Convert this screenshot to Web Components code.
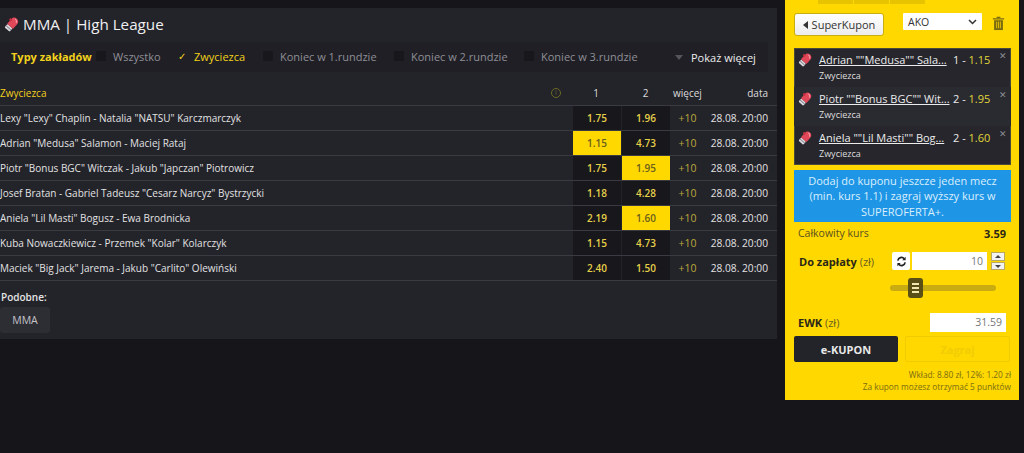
<!DOCTYPE html>
<html lang="pl">
<head>
<meta charset="utf-8">
<title>MMA | High League</title>
<style>
  html, body { margin: 0; height: 453px; overflow: hidden; background: #15151a; }
  body { font-family: "Open Sans", sans-serif; color: #e4e4e4; }
  #page { display: flex; align-items: flex-start; }
</style>
</head>
<body>
<div id="page">
  <league-panel title-text="MMA | High League">
    <market-filter slot="filters"></market-filter>
    <odds-row names='Lexy "Lexy" Chaplin - Natalia "NATSU" Karczmarczyk' one="1.75" two="1.96"></odds-row>
    <odds-row names='Adrian "Medusa" Salamon - Maciej Rataj' one="1.15" two="4.73" picked="1"></odds-row>
    <odds-row names='Piotr "Bonus BGC" Witczak - Jakub "Japczan" Piotrowicz' one="1.75" two="1.95" picked="2"></odds-row>
    <odds-row names='Josef Bratan - Gabriel Tadeusz "Cesarz Narcyz" Bystrzycki' one="1.18" two="4.28"></odds-row>
    <odds-row names='Aniela "Lil Masti" Bogusz - Ewa Brodnicka' one="2.19" two="1.60" picked="2"></odds-row>
    <odds-row names='Kuba Nowaczkiewicz - Przemek "Kolar" Kolarczyk' one="1.15" two="4.73"></odds-row>
    <odds-row names='Maciek "Big Jack" Jarema - Jakub "Carlito" Olewiński' one="2.40" two="1.50"></odds-row>
  </league-panel>
  <coupon-panel>
    <coupon-item names='Adrian ""Medusa"" Sala...' pick="1" odd="1.15"></coupon-item>
    <coupon-item names='Piotr ""Bonus BGC"" Wit...' pick="2" odd="1.95"></coupon-item>
    <coupon-item names='Aniela ""Lil Masti"" Bog...' pick="2" odd="1.60"></coupon-item>
  </coupon-panel>
</div>

<script>
const gloveIcon = (size) => `
  <svg width="${size}" height="${size}" viewBox="0 0 16 16" aria-hidden="true">
    <g transform="rotate(42 8 8)">
      <rect x="4.6" y="11" width="6.8" height="4.4" rx="1" fill="#d9d9de"/>
      <rect x="4.6" y="12.6" width="6.8" height="1" fill="#8a8a92"/>
      <path d="M4.2 11 V4.6 C4.2 2 6 .8 8 .8 C10.4 .8 12 2.4 12 4.8 V11 Z" fill="#e0485a"/>
      <path d="M4.2 7 C2.6 7 2.2 5.2 3.4 4.4 L5.4 4.8 V7 Z" fill="#c7303f"/>
      <path d="M7 2.4 C8.6 2 10.2 3 10.4 4.6" fill="none" stroke="#f3a0aa" stroke-width="1"/>
    </g>
  </svg>`;

class LeaguePanel extends HTMLElement {
  constructor() {
    super();
    this.shadowDOM = this.attachShadow({ mode: "open" });
  }

  connectedCallback() {
    this.shadowDOM.innerHTML = `
    <style>
      :host {
        display: block;
        width: 777px;
        margin-top: 8px;
        background: #23232a;
        flex: none;
      }
      header {
        display: flex;
        align-items: center;
        gap: 3px;
        height: 34px;
        padding: 0 0 2px 4px;
        box-sizing: border-box;
        font-size: 15.2px;
        color: #f0f0f0;
      }
      .head {
        display: flex;
        align-items: center;
        height: 24px;
        margin-top: 9px;
        font-size: 10px;
      }
      .head .name { flex: 1; color: #f2cf1c; }
      .head .info {
        width: 10px;
        height: 10px;
        margin-right: 12px;
        border: 1px solid #6b6a24;
        border-radius: 50%;
        box-sizing: border-box;
        color: #6b6a24;
        font-size: 7px;
        line-height: 8px;
        text-align: center;
      }
      .head span.c { text-align: center; color: #dcdcdc; box-sizing: border-box; }
      .c1 { width: 49px; padding-right: 3px; }
      .c2 { width: 49px; padding-right: 2px; }
      .c3 { width: 33px; }
      .head span.c4 { width: 73px; padding-right: 9px; text-align: right; }
      .rows { border-top: 1px solid #3a3a42; }
      .similar {
        display: flex;
        flex-direction: column;
        align-items: flex-start;
        padding: 9px 0 6px 1px;
        font-size: 10px;
        font-weight: 600;
      }
      .similar span:first-child { line-height: 14px; }
      .tag {
        display: flex;
        align-items: center;
        justify-content: center;
        width: 50px;
        height: 26px;
        margin: 3px 0 0 -1px;
        border-radius: 3px;
        background: #2d2d34;
        color: #c4c4c8;
        font-size: 10.5px;
        font-weight: 400;
      }
    </style>
    <header>${gloveIcon(16)}<span>${this.getAttribute("title-text")}</span></header>
    <slot name="filters"></slot>
    <div class="head">
      <span class="name">Zwyciezca</span>
      <span class="info">i</span>
      <span class="c c1">1</span><span class="c c2">2</span><span class="c c3">więcej</span><span class="c c4">data</span>
    </div>
    <div class="rows"><slot></slot></div>
    <div class="similar">
      <span>Podobne:</span>
      <span class="tag">MMA</span>
    </div>
    `;
  }
}

class MarketFilter extends HTMLElement {
  constructor() {
    super();
    this.shadowDOM = this.attachShadow({ mode: "open" });
  }

  connectedCallback() {
    const options = [
      ["Wszystko", 81],
      ["Zwyciezca", 86, true],
      ["Koniec w 1.rundzie", 131],
      ["Koniec w 2.rundzie", 130],
      ["Koniec w 3.rundzie", 130],
    ];
    this.shadowDOM.innerHTML = `
    <style>
      :host {
        display: flex;
        align-items: center;
        box-sizing: border-box;
        height: 30px;
        margin-right: 9px;
        padding: 0 0 2px 11px;
        background: #1f1f25;
        font-size: 11px;
      }
      b { width: 85px; flex: none; color: #f2d21c; font-weight: 700; }
      .opt { display: flex; align-items: center; gap: 7px; flex: none; color: #8f8f96; }
      .box {
        width: 10px;
        height: 10px;
        background: #17171c;
        flex: none;
        color: #f2d21c;
        font-size: 10px;
        line-height: 10px;
        text-align: center;
      }
      .on { color: #f2d21c; }
      .on .box { background: transparent; }
      .more {
        display: flex;
        align-items: center;
        gap: 8px;
        margin: 2px 0 0 21px;
        color: #ececec;
      }
      .more i {
        width: 0;
        height: 0;
        border: 4px solid transparent;
        border-top: 5px solid #55555c;
        border-bottom: 0;
      }
    </style>
    <b>Typy zakładów</b>
    ${options.map(([label, width, on]) => `
      <div class="opt ${on ? "on" : ""}" style="width:${width}px">
        <span class="box">${on ? "✓" : ""}</span><span>${label}</span>
      </div>`).join("")}
    <div class="more"><i></i><span>Pokaż więcej</span></div>
    `;
  }
}

class OddsRow extends HTMLElement {
  constructor() {
    super();
    this.shadowDOM = this.attachShadow({ mode: "open" });
  }

  connectedCallback() {
    const picked = this.getAttribute("picked");
    this.shadowDOM.innerHTML = `
    <style>
      :host {
        display: flex;
        align-items: stretch;
        height: 25px;
        box-sizing: border-box;
        border-bottom: 1px solid #3a3a42;
        font-size: 10px;
        color: #e2e2e2;
      }
      .names { flex: 1; align-self: center; }
      .odd {
        display: flex;
        align-items: center;
        justify-content: center;
        width: 48px;
        margin-right: 1px;
        background: #17171c;
        color: #e6d04a;
        font-weight: 600;
      }
      .odd.on { background: #ffd800; color: #6b5f1e; }
      .more { width: 33px; align-self: center; text-align: center; color: #bda93a; font-size: 10.5px; }
      .date { width: 73px; padding-right: 9px; box-sizing: border-box; align-self: center; text-align: right; font-size: 10.2px; }
    </style>
    <span class="names">${this.getAttribute("names").replace(/"/g, "&quot;")}</span>
    <span class="odd ${picked === "1" ? "on" : ""}">${this.getAttribute("one")}</span>
    <span class="odd ${picked === "2" ? "on" : ""}">${this.getAttribute("two")}</span>
    <span class="more">+10</span>
    <span class="date">28.08. 20:00</span>
    `;
  }
}

class CouponItem extends HTMLElement {
  constructor() {
    super();
    this.shadowDOM = this.attachShadow({ mode: "open" });
  }

  connectedCallback() {
    this.shadowDOM.innerHTML = `
    <style>
      :host {
        display: grid;
        grid-template-columns: 21px 134px 1fr;
        grid-template-rows: 15px 15px;
        row-gap: 1px;
        height: 39px;
        padding: 4px 0 0 4px;
        box-sizing: border-box;
        position: relative;
        font-size: 11px;
        color: #ececec;
      }
      :host(:nth-child(even)) { background: #2a2a31; }
      .name { text-decoration: underline; white-space: nowrap; }
      .pick { white-space: nowrap; }
      .pick em { font-style: normal; color: #e0d63a; }
      .sub { grid-column: 2; font-size: 9px; line-height: 15px; color: #dedede; }
      .close { position: absolute; top: 1px; right: 4px; color: #8d8d93; font-size: 9px; }
    </style>
    <span>${gloveIcon(15)}</span>
    <span class="name">${this.getAttribute("names").replace(/"/g, "&quot;")}</span>
    <span class="pick">${this.getAttribute("pick")} - <em>${this.getAttribute("odd")}</em></span>
    <span class="sub">Zwyciezca</span>
    <span class="close">✕</span>
    `;
  }
}

class CouponPanel extends HTMLElement {
  constructor() {
    super();
    this.shadowDOM = this.attachShadow({ mode: "open" });
  }

  connectedCallback() {
    this.shadowDOM.innerHTML = `
    <style>
      :host {
        display: block;
        box-sizing: border-box;
        width: 234px;
        height: 400px;
        margin-left: 8px;
        padding: 0 8px 0 9px;
        background: #ffd800;
        color: #3a3520;
        font-size: 11px;
        flex: none;
      }
      .tabs {
        display: flex;
        gap: 1px;
        height: 4px;
        margin-left: 24px;
        width: 107px;
      }
      .tabs span { flex: 1; background: #e8c400; }
      .top {
        display: flex;
        align-items: flex-start;
        margin-top: 9px;
        height: 26px;
      }
      .super {
        display: flex;
        align-items: center;
        justify-content: center;
        gap: 4px;
        width: 90px;
        height: 23px;
        box-sizing: border-box;
        border: 1px solid #c9ad14;
        border-radius: 3px;
        background: linear-gradient(#fff, #ececec);
        color: #333;
        font-size: 11px;
      }
      .super i {
        width: 0;
        height: 0;
        border: 4px solid transparent;
        border-right: 5px solid #333;
        border-left: 0;
      }
      .ako {
        display: flex;
        align-items: center;
        justify-content: space-between;
        width: 79px;
        height: 17px;
        margin-left: 19px;
        padding: 0 5px;
        box-sizing: border-box;
        border-radius: 1px;
        background: #fff;
        color: #333;
        font-size: 10.5px;
      }
      .trash { margin: 3px 0 0 10px; }
      .list {
        margin-top: 9px;
        background: #26262c;
        outline: 1px solid #4a4a3a;
        outline-offset: -1px;
      }
      .offer {
        margin-top: 5px;
        height: 52px;
        display: flex;
        align-items: center;
        justify-content: center;
        padding: 0 8px;
        background: #1f95e6;
        color: #d9effc;
        font-size: 11px;
        line-height: 15.3px;
        text-align: center;
      }
      .total {
        display: flex;
        justify-content: space-between;
        padding: 4px 5px 0 4px;
        height: 21px;
        box-sizing: border-box;
        font-size: 10.5px;
        color: #5a5120;
      }
      .total b { color: #2b2717; font-size: 11px; }
      .pay {
        display: flex;
        align-items: center;
        height: 18px;
        margin-top: 9px;
        padding-left: 5px;
      }
      .pay .lbl { width: 93px; }
      .lbl b { color: #2b2717; }
      .lbl { color: #6a5f20; }
      .refresh {
        display: flex;
        align-items: center;
        justify-content: center;
        width: 18px;
        height: 18px;
        background: #fff;
        border-radius: 2px;
        margin-right: 2px;
      }
      .amount {
        width: 75px;
        height: 18px;
        padding-right: 4px;
        box-sizing: border-box;
        background: #fff;
        text-align: right;
        line-height: 18px;
        color: #777;
        font-size: 10.5px;
      }
      .spin {
        display: flex;
        flex-direction: column;
        gap: 1px;
        width: 14px;
        height: 18px;
        margin-left: 4px;
      }
      .spin span {
        flex: 1;
        background: #f2f2f2;
        border: 1px solid #b8a860;
        box-sizing: border-box;
        position: relative;
      }
      .spin span::after {
        content: "";
        position: absolute;
        left: 3px;
        top: 2px;
        border: 3px solid transparent;
        border-top: 0;
        border-bottom: 3px solid #444;
      }
      .spin span + span::after { transform: rotate(180deg); }
      .slider {
        position: relative;
        height: 6px;
        margin: 15px 15px 0 96px;
        border-radius: 3px;
        background: #c9ab12;
      }
      .slider i {
        position: absolute;
        left: 18px;
        top: -7px;
        width: 15px;
        height: 20px;
        border-radius: 3px;
        background: #5a5016;
        display: flex;
        flex-direction: column;
        align-items: center;
        justify-content: center;
        gap: 2px;
      }
      .slider i u { width: 7px; height: 2px; background: #f3e9b0; }
      .ewk {
        display: flex;
        align-items: center;
        justify-content: space-between;
        height: 19px;
        margin-top: 22px;
        padding: 0 5px 0 4px;
      }
      .ewk .val {
        width: 76px;
        height: 19px;
        padding-right: 4px;
        box-sizing: border-box;
        background: #fff;
        text-align: right;
        line-height: 19px;
        color: #777;
        font-size: 10.5px;
      }
      .actions { display: flex; gap: 7px; margin-top: 4px; }
      .actions span {
        display: flex;
        align-items: center;
        justify-content: center;
        height: 26px;
        border-radius: 2px;
        font-weight: 700;
      }
      .ekupon { width: 104px; background: #23232a; color: #e8e8e8; }
      .zagraj { width: 105px; box-sizing: border-box; border: 1px solid #f0cb00; color: #f2cd05; }
      .note { margin-top: 7px; text-align: right; font-size: 8.3px; line-height: 12px; color: #7b6d15; white-space: nowrap; }
    </style>
    <div class="tabs"><span></span><span></span><span></span></div>
    <div class="top">
      <span class="super"><i></i>SuperKupon</span>
      <span class="ako">AKO
        <svg width="9" height="6" viewBox="0 0 9 6"><path d="M1 1l3.500 3.500L8 1" fill="none" stroke="#333" stroke-width="1.500"/></svg>
      </span>
      <svg class="trash" width="13" height="15" viewBox="0 0 13 16" aria-hidden="true">
        <path d="M4.500 1.500h4M.5 3h12" stroke="#7a6a10" stroke-width="1.400" fill="none"/>
        <path d="M1.800 4.500h9.400V15H1.800z" fill="#7a6a10"/>
        <path d="M4.500 6v7M6.500 6v7M8.500 6v7" stroke="#ffd800" stroke-width=".8"/>
      </svg>
    </div>
    <div class="list"><slot></slot></div>
    <div class="offer">Dodaj do kuponu jeszcze jeden mecz (min. kurs 1.1) i zagraj wyższy kurs w SUPEROFERTA+.</div>
    <div class="total"><span>Całkowity kurs</span><b>3.59</b></div>
    <div class="pay">
      <span class="lbl"><b>Do zapłaty</b> (zł)</span>
      <span class="refresh">
        <svg width="11" height="11" viewBox="0 0 12 12"><path d="M2 5a4 4 0 0 1 7-2M10 7a4 4 0 0 1-7 2" fill="none" stroke="#222" stroke-width="1.800"/><path d="M10.500 .8v3.700H6.800zM1.500 11.200V7.500h3.700z" fill="#222"/></svg>
      </span>
      <span class="amount">10</span>
      <span class="spin"><span></span><span></span></span>
    </div>
    <div class="slider"><i><u></u><u></u><u></u></i></div>
    <div class="ewk"><span class="lbl"><b>EWK</b> (zł)</span><span class="val">31.59</span></div>
    <div class="actions"><span class="ekupon">e-KUPON</span><span class="zagraj">Zagraj</span></div>
    <div class="note">Wkład: 8.80 zł, 12%: 1.20 zł<br>Za kupon możesz otrzymać 5 punktów</div>
    `;
  }
}

customElements.define("league-panel", LeaguePanel);
customElements.define("market-filter", MarketFilter);
customElements.define("odds-row", OddsRow);
customElements.define("coupon-item", CouponItem);
customElements.define("coupon-panel", CouponPanel);
</script>
</body>
</html>
